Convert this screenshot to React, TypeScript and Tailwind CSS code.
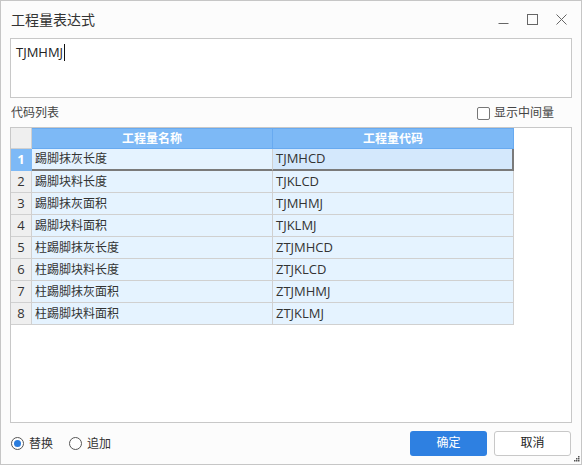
import React from 'react';

const rows = [
  { name: '踢脚抹灰长度', code: 'TJMHCD' },
  { name: '踢脚块料长度', code: 'TJKLCD' },
  { name: '踢脚抹灰面积', code: 'TJMHMJ' },
  { name: '踢脚块料面积', code: 'TJKLMJ' },
  { name: '柱踢脚抹灰长度', code: 'ZTJMHCD' },
  { name: '柱踢脚块料长度', code: 'ZTJKLCD' },
  { name: '柱踢脚抹灰面积', code: 'ZTJMHMJ' },
  { name: '柱踢脚块料面积', code: 'ZTJKLMJ' },
];

const App: React.FC = () => {
  const selected = 0;

  return (
    <div className="w-[582px] h-[465px] bg-[#fcfcfc] border border-[#c6c6c6] flex flex-col text-[#333] overflow-hidden font-['Noto_Sans','Noto_Sans_CJK_SC',sans-serif]">
      {/* Title bar */}
      <div className="h-[37px] shrink-0 flex items-center pl-[10px] pr-[14px]">
        <span className="text-[14px] text-[#333] leading-none">工程量表达式</span>
        <div className="ml-auto flex items-center gap-[18px]">
          <svg width="11" height="11" viewBox="0 0 11 11" className="mt-[1px]">
            <path d="M0.5 8.5 H10.5" stroke="#666" strokeWidth="1" />
          </svg>
          <svg width="11" height="11" viewBox="0 0 11 11">
            <rect x="0.5" y="0.5" width="10" height="10" fill="none" stroke="#666" strokeWidth="1" />
          </svg>
          <svg width="11" height="11" viewBox="0 0 11 11">
            <path d="M0.5 0.5 L10.5 10.5 M10.5 0.5 L0.5 10.5" stroke="#666" strokeWidth="1" />
          </svg>
        </div>
      </div>

      {/* Expression input */}
      <div className="px-[9px] shrink-0">
        <div className="h-[60px] bg-white border border-[#c8c8c8] px-[5px] pt-[4px]">
          <div className="flex items-center text-[13px] leading-[18px] text-[#222] font-['Open_Sans',sans-serif]">
            <span>TJMHMJ</span>
            <span className="inline-block w-px h-[17px] bg-[#111] ml-[1px]"></span>
          </div>
        </div>
      </div>

      {/* Label row */}
      <div className="h-[29px] shrink-0 flex items-center pl-[10px] pr-[27px] pt-[1px]">
        <span className="text-[12px] text-[#444]">代码列表</span>
        <label className="ml-auto flex items-center gap-[4px]">
          <span className="w-[13px] h-[13px] border border-[#777] rounded-[2px] bg-white"></span>
          <span className="text-[12px] text-[#444]">显示中间量</span>
        </label>
      </div>

      {/* Table */}
      <div className="px-[9px] shrink-0">
        <div className="h-[296px] bg-white border border-[#c8c8c8]">
          <div className="flex h-[21px] text-[12px]">
            <div className="w-[21px] bg-[#efefef] border-r border-b border-[#d0d0d0]"></div>
            <div className="w-[241px] bg-[#7db9f6] border-t border-r border-b border-[#68aaf0] text-white font-bold flex items-center justify-center">
              工程量名称
            </div>
            <div className="w-[241px] bg-[#7db9f6] border-t border-r border-b border-[#68aaf0] text-white font-bold flex items-center justify-center">
              工程量代码
            </div>
          </div>
          {rows.map((r, i) => {
            const sel = i === selected;
            return (
              <div key={i} className="flex h-[22px] text-[12px]">
                <div
                  className={`w-[21px] border-r border-b flex items-center justify-center text-[13px] font-['Open_Sans',sans-serif] ${
                    sel
                      ? 'bg-[#7db9f6] border-[#7db9f6] text-white font-bold'
                      : 'bg-[#efefef] border-[#d0d0d0] text-[#333]'
                  }`}
                >
                  {i + 1}
                </div>
                <div
                  className={`w-[241px] bg-[#e5f3ff] border-r flex items-center pl-[3px] ${
                    sel ? 'border-b-2 border-b-[#7a7a7a] border-r-[#d0d0d0]' : 'border-b border-[#d0d0d0]'
                  }`}
                >
                  {r.name}
                </div>
                <div
                  className={`w-[241px] flex items-center pl-[3px] text-[13px] font-['Open_Sans',sans-serif] ${
                    sel
                      ? 'bg-[#d4e8fc] border-b-2 border-r-2 border-[#7a7a7a]'
                      : 'bg-[#e5f3ff] border-r border-b border-[#d0d0d0]'
                  }`}
                >
                  {r.code}
                </div>
              </div>
            );
          })}
        </div>
      </div>

      {/* Bottom row */}
      <div className="flex-1 flex items-center pl-[10px] pr-[10px] relative">
        <label className="flex items-center gap-[5px]">
          <span className="w-[13px] h-[13px] rounded-full border border-[#555] bg-white flex items-center justify-center">
            <span className="w-[7px] h-[7px] rounded-full bg-[#2b7dde]"></span>
          </span>
          <span className="text-[12px] text-[#333]">替换</span>
        </label>
        <label className="flex items-center gap-[5px] ml-[16px]">
          <span className="w-[13px] h-[13px] rounded-full border border-[#555] bg-white"></span>
          <span className="text-[12px] text-[#333]">追加</span>
        </label>
        <div className="ml-auto flex items-center gap-[7px] mt-[-1px]">
          <button className="w-[77px] h-[25px] rounded-[3px] bg-[#2e80e1] text-white text-[12px]">确定</button>
          <button className="w-[77px] h-[25px] rounded-[3px] bg-white border border-[#c8c8c8] text-[#222] text-[12px]">取消</button>
        </div>
        <svg width="6" height="6" viewBox="0 0 6 6" className="absolute right-[1px] bottom-[2px]">
          <rect x="4" y="0" width="1.5" height="1.5" fill="#555" />
          <rect x="2" y="2" width="1.5" height="1.5" fill="#555" />
          <rect x="4" y="2" width="1.5" height="1.5" fill="#555" />
          <rect x="0" y="4" width="1.5" height="1.5" fill="#555" />
          <rect x="2" y="4" width="1.5" height="1.5" fill="#555" />
          <rect x="4" y="4" width="1.5" height="1.5" fill="#555" />
        </svg>
      </div>
    </div>
  );
};

export default App;
